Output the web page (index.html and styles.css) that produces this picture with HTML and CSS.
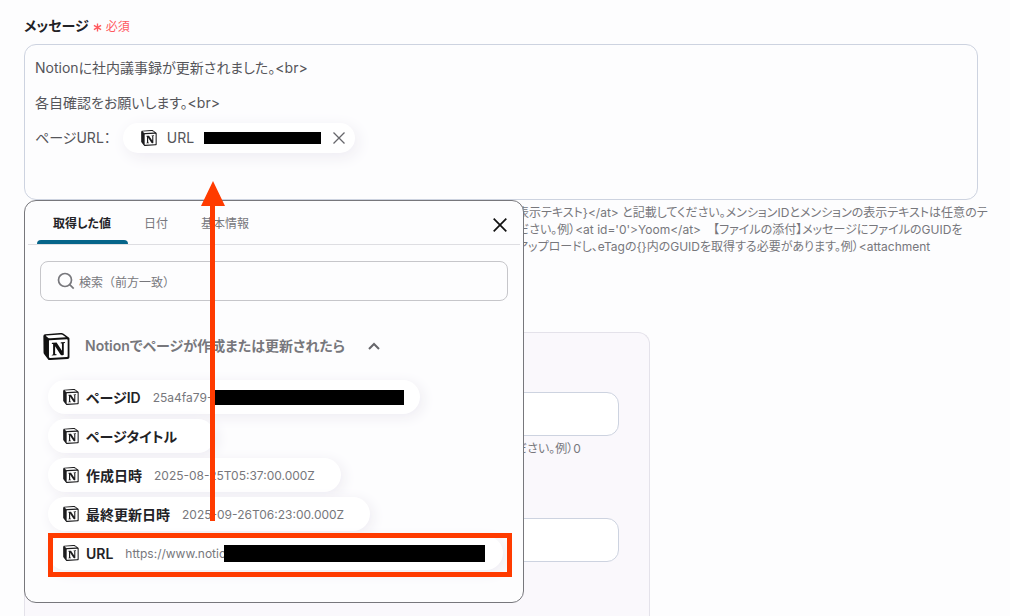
FILE: index.html
```html
<!DOCTYPE html>
<html lang="ja">
<head>
<meta charset="utf-8">
<title>メッセージ</title>
<link rel="stylesheet" href="styles.css">
</head>
<body>
<svg class="defs" aria-hidden="true">
  <symbol id="notion" viewBox="0 0 24 24">
    <path fill="#fff" d="M2 1.500 17 .7l6 4v17L6 23l-4-5z"/>
    <path fill="currentColor" d="M.6 2.200 5 6.200v16.500L.9 18z"/>
    <path fill="currentColor" d="M4.459 4.208c.746.606 1.026.56 2.428.466l13.215-.793c.28 0 .047-.28-.046-.326L17.860 1.968c-.42-.326-.981-.7-2.055-.607L3.010 2.295c-.466.046-.56.28-.374.466zm.793 3.080v13.904c0 .747.373 1.027 1.214.98l14.523-.84c.841-.046.935-.56.935-1.167V6.354c0-.606-.233-.933-.748-.887l-15.177.887c-.56.047-.747.327-.747.933zm14.337.745c.093.42 0 .84-.42.888l-.7.14v10.264c-.608.327-1.168.514-1.635.514-.748 0-.935-.234-1.495-.933l-4.577-7.186v6.952L12.210 19s0 .84-1.168.84l-3.222.186c-.093-.186 0-.653.327-.746l.84-.233V9.854L7.822 9.760c-.094-.42.14-1.026.793-1.073l3.456-.233 4.764 7.279v-6.440l-1.215-.139c-.093-.514.28-.887.747-.933zM1.936 1.035l13.310-.98c1.634-.14 2.055-.047 3.082.7l4.249 2.986c.7.513.934.653.934 1.213v16.378c0 1.026-.373 1.634-1.680 1.726l-15.458.934c-.98.047-1.448-.093-1.962-.747l-3.129-4.060c-.56-.747-.793-1.306-.793-1.960V2.667c0-.839.374-1.540 1.447-1.632z"/>
  </symbol>
</svg>
<main class="page">
  <div class="label-row">
    <span class="label" id="message-label">メッセージ</span>
    <svg class="asterisk" viewBox="0 0 10 10" aria-hidden="true"><path d="M5 .5v9M1 2.700l8 4.600M9 2.700 1 7.300"/></svg>
    <span class="required">必須</span>
  </div>

  <div class="field">
    <div class="editor" contenteditable="true" role="textbox" aria-multiline="true" aria-labelledby="message-label" spellcheck="false">
      <div class="line">Notionに社内議事録が更新されました。&lt;br&gt;</div>
      <div class="line">各自確認をお願いします。&lt;br&gt;</div>
      <div class="line line-chip">ページURL：
        <span class="token" contenteditable="false">
          <svg class="logo"><use href="#notion"/></svg>
          <span>URL</span>
          <span class="redact redact-token"></span>
          <button class="remove" type="button" aria-label="削除"><svg viewBox="0 0 12 12"><path d="M.5.5l11 11M11.500.5l-11 11"/></svg></button>
        </span>
      </div>
    </div>

    <section class="picker">
      <div class="tabs">
        <button class="tab active" type="button">取得した値</button>
        <button class="tab" type="button">日付</button>
        <button class="tab" type="button">基本情報</button>
        <button class="close" type="button" aria-label="閉じる"><svg viewBox="0 0 14 14"><path d="M.7.7l12.600 12.600M13.300.7.7 13.300"/></svg></button>
      </div>
      <label class="search">
        <svg viewBox="0 0 18 18" aria-hidden="true"><circle cx="8" cy="8" r="6.500"/><path d="m12.700 12.700 4 4"/></svg>
        <input type="text" placeholder="検索（前方一致）" aria-label="検索（前方一致）">
      </label>
      <button class="source" type="button" aria-expanded="true">
        <svg class="logo-large"><use href="#notion"/></svg>
        <span class="source-name">Notionでページが作成または更新されたら</span>
        <svg class="chevron" viewBox="0 0 12 8"><path d="m1 7 5-5 5 5"/></svg>
      </button>
      <ul class="values">
        <li><button class="chip" type="button"><svg class="logo"><use href="#notion"/></svg><b>ページID</b><span class="value">25a4fa79-<span class="redact redact-id"></span></span></button></li>
        <li><button class="chip" type="button"><svg class="logo"><use href="#notion"/></svg><b>ページタイトル</b><span class="value"></span></button></li>
        <li><button class="chip" type="button"><svg class="logo"><use href="#notion"/></svg><b>作成日時</b><span class="value">2025-08-25T05:37:00.000Z</span></button></li>
        <li><button class="chip" type="button"><svg class="logo"><use href="#notion"/></svg><b>最終更新日時</b><span class="value">2025-09-26T06:23:00.000Z</span></button></li>
        <li class="marked"><button class="chip" type="button"><svg class="logo"><use href="#notion"/></svg><b>URL</b><span class="value">https://www.notio<span class="redact redact-url"></span></span></button></li>
      </ul>
    </section>
    <svg class="arrow" viewBox="0 0 24 340" aria-hidden="true"><path d="M12 0 24 25H14V340H9V25H0z"/></svg>
  </div>

  <p class="help help-message">
    <span>表示テキスト}&lt;/at&gt; と記載してください。メンションIDとメンションの表示テキストは任意のテ</span>
    <span>ださい。例）&lt;at id='0'&gt;Yoom&lt;/at&gt;　【ファイルの添付】メッセージにファイルのGUIDを</span>
    <span>アップロードし、eTagの{}内のGUIDを取得する必要があります。例）&lt;attachment</span>
  </p>

  <div class="group">
    <input class="text-input" type="text" aria-describedby="group-help">
    <p class="help help-group" id="group-help"><span>ださい。例）0</span></p>
    <input class="text-input" type="text">
  </div>
</main>
</body>
</html>
```
FILE: styles.css
```css
* { box-sizing: border-box; }

body {
  margin: 0;
  background: #fdfdfe;
  color: #55555a;
  font-family: Inter, "Noto Sans CJK JP", sans-serif;
  font-size: 14px;
  font-feature-settings: "palt";
}

button, input {
  font: inherit;
  font-feature-settings: inherit;
  color: inherit;
}

button {
  padding: 0;
  border: 0;
  background: none;
}

svg { flex: none; }
.defs { position: absolute; width: 0; height: 0; }

.page {
  display: flex;
  flex-direction: column;
  min-height: 100vh;
  padding: 15px 32px 0 24px;
}

.label-row {
  display: flex;
  align-items: center;
  gap: 4px;
  height: 20px;
  margin-bottom: 9px;
}

.label { color: #222226; font-weight: 700; }
.required { color: #ff5a5f; font-size: 12px; }
.asterisk { width: 9px; height: 9px; margin-top: 4px; stroke: #ff5a5f; stroke-width: 1.500; }

.field { position: relative; }

.editor {
  min-height: 156px;
  padding: 5px 10px;
  border: 1px solid #cdd3e0;
  border-radius: 12px;
  outline: 0;
}

.line { line-height: 35px; }
.line-chip { display: flex; align-items: center; gap: 12px; }

.logo { width: 16px; height: 16px; color: #1c1c1e; }
.redact { background: #000; }

.token {
  display: flex;
  align-items: center;
  gap: 10px;
  height: 30px;
  padding: 0 10px 0 18px;
  border-radius: 15px;
  background: #fff;
  box-shadow: 3px 4px 16px #eeecf2;
}

.redact-token { width: 117px; height: 12px; }
.remove { display: flex; width: 12px; height: 12px; margin-left: 2px; }
.remove svg { width: 12px; stroke: #66666b; stroke-width: 1.300; }

.picker {
  position: absolute;
  top: 156px;
  left: 0;
  width: 500px;
  padding: 0 3px 32px;
  border: 1px solid #77777c;
  border-radius: 12px;
  background: #fdfdfe;
}

.tabs {
  display: flex;
  height: 44px;
  padding: 0 13px 0 9px;
  border-bottom: 1px solid #dedee2;
}

.tab {
  padding: 4px 17px 0 16px;
  border-bottom: 4px solid transparent;
  color: #77777c;
  font-size: 12px;
}

.tab.active {
  position: relative;
  color: #222226;
  font-weight: 700;
}

.tab.active::after {
  content: "";
  position: absolute;
  inset: auto 0 -4px;
  height: 4px;
  border-radius: 4px 4px 0 0;
  background: #06658a;
}

.close {
  display: flex;
  align-items: center;
  margin-left: auto;
  padding-top: 4px;
}

.close svg { width: 14px; height: 14px; stroke: #111; stroke-width: 1.700; }

.search {
  display: flex;
  align-items: center;
  gap: 4px;
  height: 40px;
  margin: 16px 12px 0;
  padding: 0 16px;
  border: 1px solid #c6c6ca;
  border-radius: 8px;
}

.search svg { width: 18px; height: 18px; fill: none; stroke: #77777c; stroke-width: 1.700; }
.search input { flex: 1; min-width: 0; padding: 2px 0 0; border: 0; outline: 0; background: none; font-size: 12px; font-feature-settings: normal; }
.search input::placeholder { color: #77777c; opacity: 1; }

.source {
  display: flex;
  align-items: center;
  height: 30px;
  margin: 30px 15px 18px;
  color: #77777c;
  font-weight: 600;
}

.logo-large { width: 27px; height: 27px; color: #111; }
.source-name { margin: 0 23px 0 15px; padding-bottom: 2px; }
.chevron { width: 12px; height: 8px; fill: none; stroke: #66666b; stroke-width: 2; }

.values {
  display: flex;
  flex-direction: column;
  gap: 5px;
  margin: 0;
  padding: 1px 8px 0 20px;
  list-style: none;
}

.values li { display: flex; position: relative; }

.chip {
  display: flex;
  align-items: center;
  height: 34px;
  padding: 0 26px 0 15px;
  border-radius: 17px;
  background: #fff;
  box-shadow: 3px 3px 14px #eeecf2;
}

.chip b { margin: 0 12px 0 7px; color: #222226; font-weight: 600; }

.value {
  display: flex;
  align-items: center;
  color: #77777c;
  font-size: 12px;
}

.redact-id { width: 192px; height: 15px; margin-right: -10px; }
.redact-url { width: 261px; height: 17px; margin: 0 -8px 0 -2px; }

.marked::after {
  content: "";
  position: absolute;
  inset: -3px 0 -7px;
  border: 5px solid #ff3b00;
}

.arrow {
  position: absolute;
  top: 137px;
  left: 177px;
  width: 24px;
  height: 340px;
  fill: #ff3b00;
}

.help {
  margin: 0;
  color: #77777c;
  font-size: 12px;
  line-height: 17px;
  white-space: nowrap;
}

.help span { display: block; }
.help-message { padding: 4px 0 0 493px; }
.help-group { padding: 4px 0 0 460px; }

.group {
  flex: 1;
  max-width: 626px;
  margin-top: 77px;
  padding: 59px 30px 32px;
  border: 1px solid #e4e2ea;
  border-bottom: 0;
  border-radius: 12px 12px 0 0;
  background: #faf8fc;
}

.text-input {
  display: block;
  width: 100%;
  height: 44px;
  padding: 0 12px;
  border: 1px solid #cdd3e0;
  border-radius: 12px;
  background: #fff;
}

.help-group + .text-input { margin-top: 61px; }
```
